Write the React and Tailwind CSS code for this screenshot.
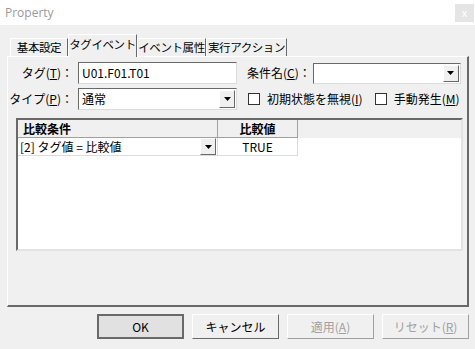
import React from 'react';

const font = { fontFamily: '"Noto Sans CJK JP", "Noto Sans", sans-serif' };

function DropButton({ className = '' }) {
  return (
    <div className={`flex items-center justify-center w-[16px] h-full bg-[#f0f0f0] border border-t-white border-l-white border-r-[#696969] border-b-[#696969] ${className}`}>
      <svg width="7" height="4" viewBox="0 0 7 4"><path d="M0 0h7L3.5 4z" fill="#000" /></svg>
    </div>
  );
}

function Tab({ label, active, w }) {
  return (
    <div
      className={`flex items-center justify-center whitespace-nowrap tracking-[-0.4px] border-t border-l border-r border-t-white border-l-white border-r-[#696969] bg-[#f0f0f0] text-[11.5px] text-black ${active ? 'h-[23px] relative z-10 -mb-[1px] pb-[3px]' : 'h-[18px]'}`}
      style={{ width: w }}
    >
      {label}
    </div>
  );
}

function Checkbox({ label, ul }) {
  return (
    <div className="flex items-center gap-[7px] text-[12px] text-black whitespace-nowrap">
      <div className="w-[12px] h-[12px] bg-white border border-[#333]" />
      <span>{label}(<span className="underline">{ul}</span>)</span>
    </div>
  );
}

export default function App() {
  return (
    <div className="w-[475px] h-[349px] bg-[#f0f0f0] overflow-hidden" style={font}>
      {/* title bar */}
      <div className="h-[25px] bg-white flex items-center justify-between pl-[5px] pr-[1px]">
        <span className="text-[12px] text-[#999]" style={{ fontFamily: '"Open Sans", sans-serif' }}>Property</span>
        <div className="w-[19px] h-[18px] bg-[#e5e5e5] flex items-center justify-center text-[11px] text-white leading-none">x</div>
      </div>

      {/* tabs */}
      <div className="h-[31px] pl-[10px] flex items-end">
        <Tab label="基本設定" w={58} />
        <Tab label="タグイベント" w={69} active />
        <Tab label="イベント属性" w={69} />
        <Tab label="実行アクション" w={81} />
      </div>

      {/* panel */}
      <div className="ml-[7px] w-[462px] h-[251px] border border-t-white border-l-white border-r-[#696969] border-b-[#696969] border-r-2 border-b-2 flex flex-col">
        <div className="flex items-center mt-[5px] h-[22px]">
          <div className="w-[67px] text-right text-[12px] pr-[2px] whitespace-nowrap">タグ(<span className="underline">T</span>)：</div>
          <div className="ml-[3px] w-[159px] h-[22px] bg-white border border-t-[#696969] border-l-[#696969] border-r-[#dcdcdc] border-b-[#dcdcdc] flex items-center pl-[3px] text-[12px]">U01.F01.T01</div>
          <div className="ml-[10px] text-[12px] whitespace-nowrap">条件名(<span className="underline">C</span>)：</div>
          <div className="ml-[2px] w-[148px] h-[21px] bg-white border border-t-[#696969] border-l-[#696969] border-r-[#dcdcdc] border-b-[#dcdcdc] flex justify-end p-[1px]">
            <DropButton />
          </div>
        </div>
        <div className="flex items-center mt-[4px] h-[22px]">
          <div className="w-[67px] text-right text-[12px] pr-[2px] whitespace-nowrap">タイプ(<span className="underline">P</span>)：</div>
          <div className="ml-[3px] w-[159px] h-[22px] bg-white border border-t-[#696969] border-l-[#696969] border-r-[#dcdcdc] border-b-[#dcdcdc] flex items-center justify-between pl-[3px] p-[1px] text-[12px]">
            <span>通常</span>
            <DropButton />
          </div>
          <div className="ml-[11px] flex items-center gap-[12px]">
            <Checkbox label="初期状態を無視" ul="I" />
            <Checkbox label="手動発生" ul="M" />
          </div>
        </div>

        {/* grid */}
        <div className="ml-[8px] mt-[8px] w-[447px] h-[133px] border-2 border-t-[#696969] border-l-[#696969] border-r-[#e3e3e3] border-b-[#e3e3e3] bg-white flex flex-col">
          <div className="flex h-[18px] bg-[#f0f0f0] text-[12px] font-bold">
            <div className="w-[200px] border-r border-b border-[#a0a0a0] pl-[5px] flex items-center">比較条件</div>
            <div className="w-[80px] border-r border-b border-[#a0a0a0] flex items-center justify-center">比較値</div>
          </div>
          <div className="flex h-[18px] text-[12px]">
            <div className="w-[200px] border-r border-b border-[#dcdcdc] pl-[2px] flex items-center justify-between pr-[1px]">
              <span>[2] タグ値 = 比較値</span>
              <DropButton className="h-[16px]" />
            </div>
            <div className="w-[80px] border-r border-b border-[#dcdcdc] flex items-center justify-center">TRUE</div>
          </div>
        </div>
      </div>

      {/* buttons */}
      <div className="flex mt-[7px] pl-[97px] gap-[8px] text-[12px]">
        <div className="w-[87px] h-[25px] border-2 border-[#696969] bg-[#e1e1e1] flex items-center justify-center">OK</div>
        <div className="w-[87px] h-[25px] border border-t-white border-l-white border-r-[#696969] border-b-[#696969] bg-[#f0f0f0] flex items-center justify-center">キャンセル</div>
        <div className="w-[87px] h-[25px] border border-t-white border-l-white border-r-[#a0a0a0] border-b-[#a0a0a0] bg-[#f0f0f0] flex items-center justify-center text-[#a0a0a0]">適用(<span className="underline">A</span>)</div>
        <div className="w-[87px] h-[25px] border border-t-white border-l-white border-r-[#a0a0a0] border-b-[#a0a0a0] bg-[#f0f0f0] flex items-center justify-center text-[#a0a0a0]">リセット(<span className="underline">R</span>)</div>
      </div>
    </div>
  );
}
